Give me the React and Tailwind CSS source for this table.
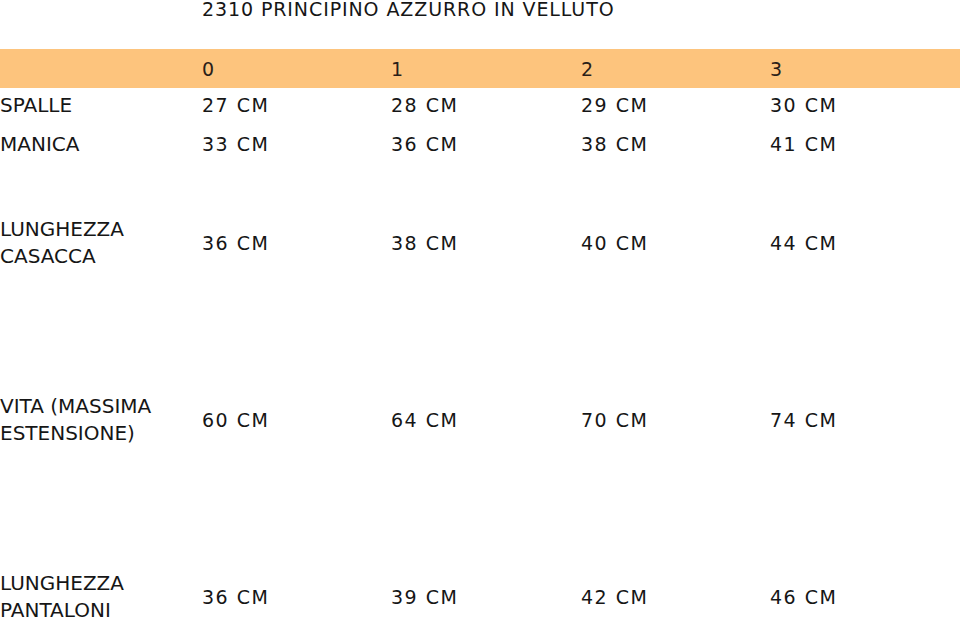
export default function App() {
  const cols = ["0", "1", "2", "3"];
  const rows = [
    { label: ["SPALLE"], vals: ["27 CM", "28 CM", "29 CM", "30 CM"], h: "h-[34px]" },
    { label: ["MANICA"], vals: ["33 CM", "36 CM", "38 CM", "41 CM"], h: "h-[44px]" },
    { label: ["LUNGHEZZA", "CASACCA"], vals: ["36 CM", "38 CM", "40 CM", "44 CM"], h: "h-[154px]" },
    { label: ["VITA (MASSIMA", "ESTENSIONE)"], vals: ["60 CM", "64 CM", "70 CM", "74 CM"], h: "h-[200px]" },
    { label: ["LUNGHEZZA", "PANTALONI"], vals: ["36 CM", "39 CM", "42 CM", "46 CM"], h: "h-[154px]" },
  ];
  const grid = "grid grid-cols-[202px_189px_190px_189px_1fr]";
  return (
    <div className="w-[960px] h-[618px] overflow-hidden bg-white text-[#161616] font-['DejaVu_Sans',sans-serif] text-[19px]">
      <div className="h-[49px] pl-[202px]">
        <div className="leading-[19px] tracking-[0.9px]">2310 PRINCIPINO AZZURRO IN VELLUTO</div>
      </div>
      <div className={`${grid} h-[39px] items-center bg-[#fdc47d] text-[#2a2018]`}>
        <div></div>
        {cols.map((c) => (
          <div key={c} className="leading-[24px] tracking-[1.5px]">{c}</div>
        ))}
      </div>
      {rows.map((r, i) => (
        <div key={i} className={`${grid} ${r.h} items-center`}>
          <div className="leading-[27px] text-[20px]">
            {r.label.map((l) => (
              <div key={l}>{l}</div>
            ))}
          </div>
          {r.vals.map((v, j) => (
            <div key={j} className="leading-[24px] tracking-[1.5px]">{v}</div>
          ))}
        </div>
      ))}
    </div>
  );
}
